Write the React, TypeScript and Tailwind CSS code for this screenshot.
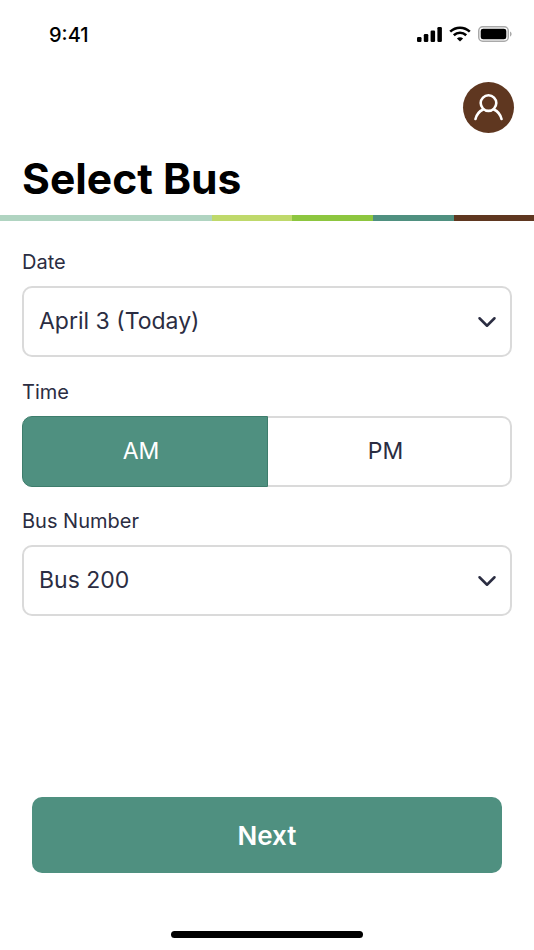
import { ChevronDown } from "lucide-react";

function SelectBox({ value }: { value: string }) {
  return (
    <div className="mx-[22px] h-[71px] flex items-center justify-between pl-[15px] pr-[8px] bg-white border-2 border-[#dadada] rounded-[10px]">
      <span className="text-[23px] text-[#2b2d42] leading-none">{value}</span>
      <ChevronDown size={30} strokeWidth={2} className="text-[#2b2d42]" />
    </div>
  );
}

function FieldLabel({ text }: { text: string }) {
  return <div className="mx-[22px] text-[20px] leading-[24px] text-[#2b2d42]">{text}</div>;
}

function StatusBar() {
  return (
    <div className="h-[68px] flex items-center justify-between pl-[49px] pr-[22px] text-black">
      <span className="pt-[1px] text-[20px] font-medium leading-none">9:41</span>
      <div className="flex items-center gap-[7px]">
        <svg width="25" height="15" viewBox="0 0 25 15" fill="currentColor">
          <rect x="0" y="10" width="4.5" height="5" rx="1.2" />
          <rect x="6.8" y="7" width="4.5" height="8" rx="1.2" />
          <rect x="13.6" y="3.5" width="4.5" height="11.5" rx="1.2" />
          <rect x="20.4" y="0" width="4.5" height="15" rx="1.2" />
        </svg>
        <svg width="22" height="16" viewBox="0 0 22 16" fill="none" stroke="currentColor" strokeWidth="2.6">
          <path d="M1.2 5.6C6.8 0.4 15.2 0.4 20.8 5.6" />
          <path d="M4.8 9.2C8.4 6 13.6 6 17.2 9.2" />
          <path d="M11 15.6L7.9 12.4C9.7 10.9 12.3 10.9 14.1 12.4Z" fill="currentColor" stroke="none" />
        </svg>
        <svg width="34" height="16" viewBox="0 0 34 16" fill="none">
          <rect x="0.75" y="0.75" width="29.5" height="14.5" rx="4" stroke="#a9a9a9" strokeWidth="1.5" />
          <rect x="2.7" y="2.7" width="25.6" height="10.6" rx="2.4" fill="currentColor" />
          <path d="M32 5.4C33 5.8 33.6 6.8 33.6 8C33.6 9.2 33 10.2 32 10.6Z" fill="#a9a9a9" />
        </svg>
      </div>
    </div>
  );
}

export default function App() {
  return (
    <div className="w-[534px] h-[950px] bg-white flex flex-col font-['Inter',sans-serif]">
      <StatusBar />

      <div className="flex justify-end pr-5 pt-[14px]">
        <div className="w-[51px] h-[51px] rounded-full bg-[#5f3720] flex items-center justify-center">
          <svg width="29" height="27" viewBox="0 0 29 27" fill="none" stroke="white" strokeWidth="2.6" strokeLinecap="round">
            <circle cx="14.5" cy="9.1" r="7.8" />
            <path d="M1.5 25C2.6 20.5 5.8 17 9 15.5" />
            <path d="M27.5 25C26.4 20.5 23.2 17 20 15.5" />
          </svg>
        </div>
      </div>

      <h1 className="mt-[18px] ml-[22px] text-[42.6px] leading-[56px] font-bold text-black">Select Bus</h1>

      {/* progress strip */}
      <div className="mt-[8px] h-[6px] flex">
        <div className="w-[212px] bg-[#b0d4c1]" />
        <div className="w-[80px] bg-[#bfd96b]" />
        <div className="w-[81px] bg-[#8dc63f]" />
        <div className="w-[81px] bg-[#4f9080]" />
        <div className="w-[80px] bg-[#5f3720]" />
      </div>

      <div className="mt-[29px]">
        <FieldLabel text="Date" />
      </div>
      <div className="mt-[12px]">
        <SelectBox value="April 3 (Today)" />
      </div>

      <div className="mt-[23px]">
        <FieldLabel text="Time" />
      </div>
      <div className="mt-[12px] mx-[22px] h-[71px] flex">
        <div className="w-[246px] pr-2 bg-[#4f9080] border border-[#3e7d6c] rounded-l-[10px] flex items-center justify-center text-white text-[23px]">
          AM
        </div>
        <div className="flex-1 pr-[7px] flex items-center justify-center bg-white border-2 border-l-0 border-[#dadada] rounded-r-[10px] text-[23px] text-[#2b2d42]">
          PM
        </div>
      </div>

      <div className="mt-[22px]">
        <FieldLabel text="Bus Number" />
      </div>
      <div className="mt-[12px]">
        <SelectBox value="Bus 200" />
      </div>

      <div className="flex-1" />

      <button className="mx-[32px] h-[76px] rounded-[10px] bg-[#4f9080] text-white text-[26px] font-semibold">
        Next
      </button>

      <div className="mt-[58px] mb-[12px] mx-auto w-[192px] h-[7px] rounded-full bg-black" />
    </div>
  );
}
